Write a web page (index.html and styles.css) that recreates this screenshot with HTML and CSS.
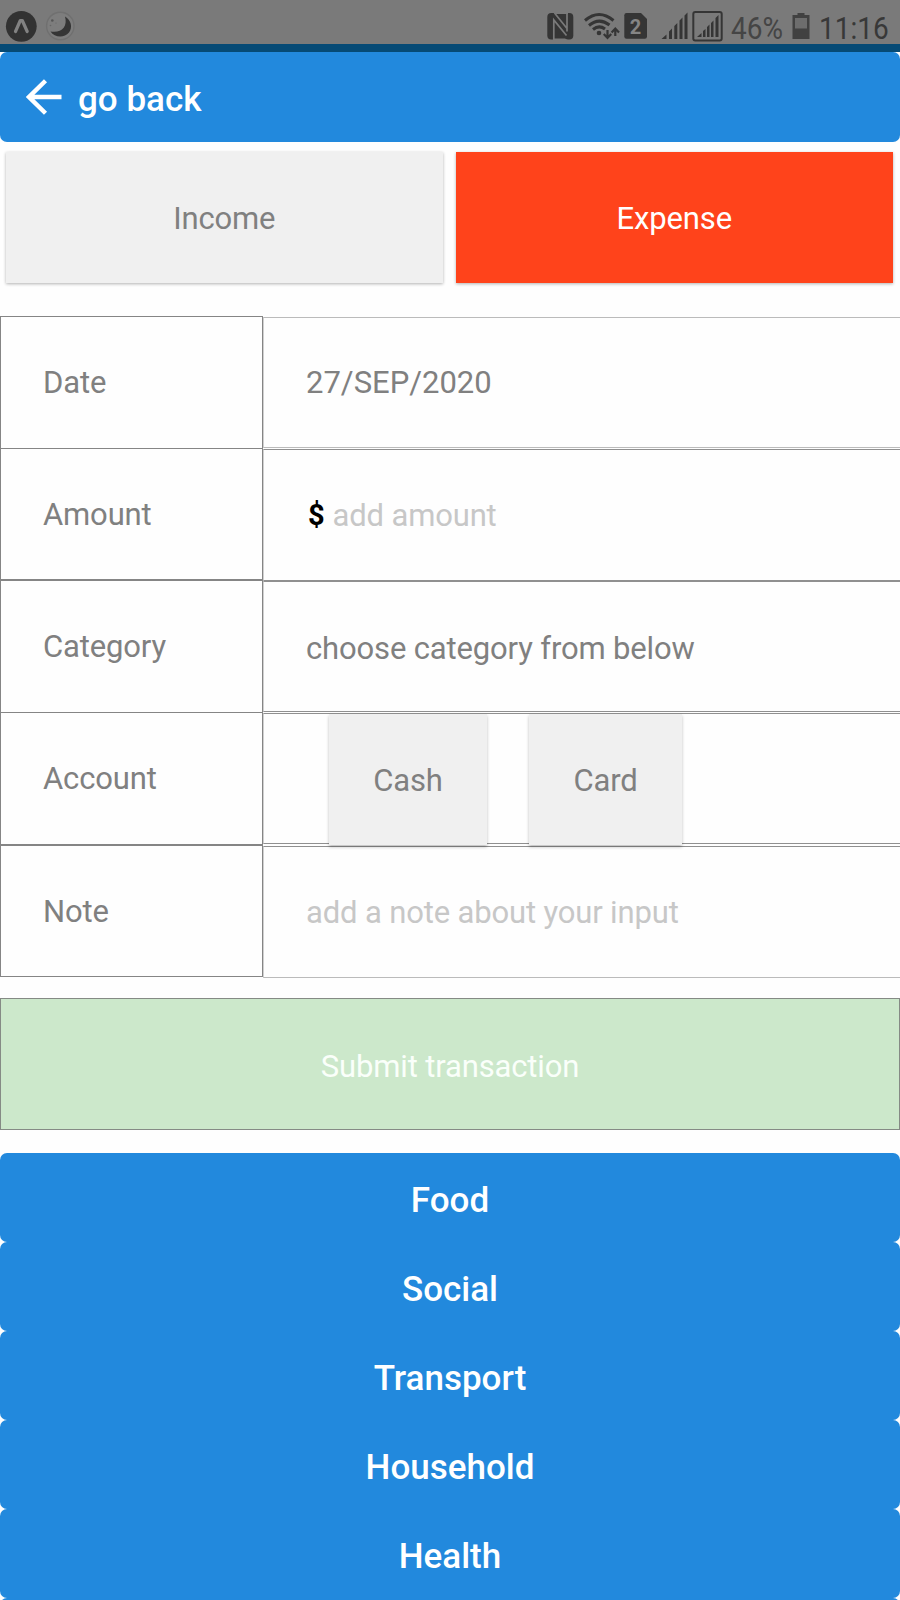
FILE: index.html
```html
<!DOCTYPE html>
<html lang="en">
<head>
<meta charset="utf-8">
<title>Add transaction</title>
<link rel="stylesheet" href="styles.css">
</head>
<body>
<div class="screen">
  <div class="status">
    <svg class="status-icons" width="80" height="44" viewBox="0 0 80 44">
      <circle cx="21.3" cy="26.3" r="15.4" fill="#323232"/>
      <path d="M15.500 31.500L20.300 20.500H22.300L27.200 31.500" fill="none" stroke="#828282" stroke-width="3.200" stroke-linecap="round" stroke-linejoin="round"/>
      <circle cx="60.3" cy="26" r="13.7" fill="#7d7d7d" stroke="#707070" stroke-width="1.4"/>
      <path d="M65 16.500C71 20 73 27 69 32.500C64 38.500 54.500 37.500 50.500 31.500C61 33.500 68 27 65 16.500Z" fill="#353535"/>
      <circle cx="52.300" cy="20.500" r="1.300" fill="#555"/><circle cx="50.500" cy="25.500" r=".8" fill="#666"/><circle cx="56" cy="23" r=".6" fill="#666"/>
    </svg>
    <svg class="status-icons status-signal" width="178" height="44" viewBox="545 0 178 44">
      <rect x="547.300" y="13" width="26" height="26.500" rx="4" fill="#353535"/>
      <path d="M553.800 39.500V20L566.500 35.500M554.500 13L567 28.500M567 13V31.500" stroke="#7a7a7a" stroke-width="1.700" fill="none"/>
      <path d="M552.500 12.500H568V14H555.500ZM553 40V38.500H565L568 40Z" fill="#7a7a7a"/>
      <g fill="none" stroke="#353535" stroke-width="3">
        <path d="M585 20.500Q599 8.500 613.500 20.500"/>
        <path d="M589 25.500Q599 17 609.500 25"/>
        <path d="M593 29.500Q599 24.500 605 29"/>
      </g>
      <circle cx="599" cy="33" r="2.300" fill="#353535"/>
      <path d="M607.500 30V37M603.800 34L607.500 38L611.200 34M615.300 36V29M611.600 32.500L615.300 28.500L619 32.500" stroke="#353535" stroke-width="2.200" fill="none"/>
      <path d="M626.500 13H641L647 19V36.500Q647 38.700 644.800 38.700H626.500Q624.300 38.700 624.300 36.500V15.200Q624.300 13 626.500 13Z" fill="#353535"/>
      <text x="635.500" y="33.600" text-anchor="middle" class="sim">2</text>
      <path d="M661.500 39L666.500 34.500V39ZM669 31.500L672 28.500V39H669ZM674.300 26L677.300 23V39H674.300ZM679.500 20.500L682.500 17.500V39H679.500ZM684.500 15.500L687.500 12.500V39H684.500Z" fill="#353535"/>
      <rect x="693.300" y="12" width="28.400" height="28.500" rx="2" fill="none" stroke="#353535" stroke-width="2"/>
      <path d="M697 37L701.500 33V37ZM703 31L705.500 29V37H703ZM707 27L709.500 24.500V37H707ZM711 23L713.500 20.500V37H711ZM715.500 18L718.500 15V37H715.500Z" fill="#353535"/>
    </svg>
    <span class="percent">46%</span>
    <svg class="battery" width="18" height="44" viewBox="0 0 18 44">
      <path d="M5.500 13H12.500V15H17.500V39H.5V15H5.500Z" fill="#414141"/>
      <rect x="3" y="18" width="12" height="10.500" fill="#6d6d6d"/>
    </svg>
    <span class="clock">11:16</span>
  </div>
  <div class="strip">
    <header class="header">
      <svg width="36" height="36" viewBox="0 0 36 36"><path d="M35.500 18H3M19.500 1.700L3 18L19.500 34.300" fill="none" stroke="#fff" stroke-width="4.400"/></svg>
      <span class="title">go back</span>
    </header>
  </div>

  <div class="tabs">
    <div class="tab">Income</div>
    <div class="tab tab-active">Expense</div>
  </div>

  <div class="form">
    <div class="labels">
      <div class="label">Date</div>
      <div class="label label-short">Amount</div>
      <div class="label label-heavy">Category</div>
      <div class="label">Account</div>
      <div class="label label-heavy label-last">Note</div>
    </div>
    <div class="fields">
      <div class="field field-date">27/SEP/2020</div>
      <div class="field field-amount"><b>$</b><span class="hint">add amount</span></div>
      <div class="field field-category">choose category from below</div>
      <div class="field field-account"><div class="choice cash">Cash</div><div class="choice card">Card</div></div>
      <div class="field field-note"><span class="hint">add a note about your input</span></div>
    </div>
  </div>

  <div class="submit">Submit transaction</div>

  <div class="categories">
    <div class="category">Food</div>
    <div class="category">Social</div>
    <div class="category">Transport</div>
    <div class="category">Household</div>
    <div class="category">Health</div>
    <div class="category"></div>
  </div>
</div>
</body>
</html>
```
FILE: styles.css
```css
* { box-sizing: border-box; }

body {
  margin: 0;
  background: #fefefe;
  color: #808080;
  font-family: Roboto, "Liberation Sans", sans-serif;
  font-size: 31px;
  letter-spacing: -.15px;
}

.screen {
  display: flex;
  flex-direction: column;
  width: 900px;
  height: 1600px;
  overflow: hidden;
}

.status {
  display: flex;
  flex: none;
  height: 44px;
  background: #7a7a7a;
}

.status svg { flex: none; }
.status-signal { margin-left: 465px; }

.sim {
  font-size: 20px;
  font-weight: 700;
  fill: #858585;
}

.percent,
.clock {
  flex: none;
  line-height: 38px;
  font-size: 32px;
  letter-spacing: 0;
  padding-top: 8.500px;
  transform: scaleX(.875);
  transform-origin: left;
  white-space: nowrap;
}

.percent { width: 61px; margin-left: 8px; color: #454545; }
.clock { width: 82px; margin-left: 9px; color: #383838; }

.strip {
  flex: none;
  height: 98px;
  padding-top: 8px;
  background: linear-gradient(#064a75 8px, #fefefe 8px);
}

.header {
  display: flex;
  align-items: center;
  height: 90px;
  padding-left: 26px;
  gap: 16px;
  border-radius: 7px;
  background: #2289dd;
  color: #fff;
  font-size: 35px;
  font-weight: 500;
  letter-spacing: 0;
}

.title { padding-top: 4px; }

.tabs {
  display: flex;
  flex: none;
  gap: 12.500px;
  padding: 10.300px 7px 0 5.500px;
  height: 174px;
}

.tab {
  display: flex;
  flex: 1;
  align-items: center;
  justify-content: center;
  height: 130.500px;
  padding-top: 2px;
  background: #f0f0f0;
  box-shadow: 0 1px 3px rgba(0, 0, 0, .3);
}

.tab-active { background: #ff431b; color: #fff; }

.form { display: flex; flex: none; height: 662px; }

.labels { width: 263px; flex: none; }

.label {
  display: flex;
  align-items: center;
  height: 132px;
  padding-left: 42px;
  border: 1px solid #858585;
  border-bottom: 0;
}

.label-short { height: 131px; }
.label-heavy { height: 133px; border-top-width: 2px; }
.label-last { border-bottom: 1px solid #858585; }

.fields { flex: 1; padding-top: 1px; }

.field {
  display: flex;
  align-items: center;
  height: 131px;
  padding-left: 42px;
  border-top: 1px solid #909090;
  border-bottom: 1px solid #909090;
  border-left: 1px solid #d0d0d0;
}

.field-date { border-color: #bbb #bbb #bbb #d0d0d0; letter-spacing: 0; }
.field-amount { height: 132px; margin-top: 1px; }
.field-category { padding-top: 3px; }
.field-account { margin-top: 1px; padding-left: 65px; gap: 42px; }
.field-note { height: 132px; margin-top: 2px; padding-top: 1px; border-bottom-color: #bbb; }

.field-amount b { width: 26.500px; padding-left: 2px; color: #000; font-size: 29px; }
.hint { color: #c7c7c7; }

.choice {
  display: flex;
  flex: none;
  align-items: center;
  justify-content: center;
  align-self: flex-start;
  height: 131px;
  padding-top: 2px;
  background: #f0f0f0;
  box-shadow: 0 2px 3px rgba(0, 0, 0, .25);
}

.cash { width: 158px; }
.card { width: 153px; }

.submit {
  display: flex;
  flex: none;
  align-items: center;
  justify-content: center;
  height: 132px;
  margin-top: 20px;
  padding-top: 4px;
  border: 1px solid #858a85;
  background: #cce8cb;
  color: #fafffa;
}

.categories { margin-top: 22.500px; }

.category {
  display: flex;
  align-items: center;
  justify-content: center;
  height: 89.200px;
  padding-top: 6px;
  border-radius: 7px;
  background: #2289dd;
  color: #fff;
  font-size: 35px;
  font-weight: 500;
  letter-spacing: 0;
}
```
